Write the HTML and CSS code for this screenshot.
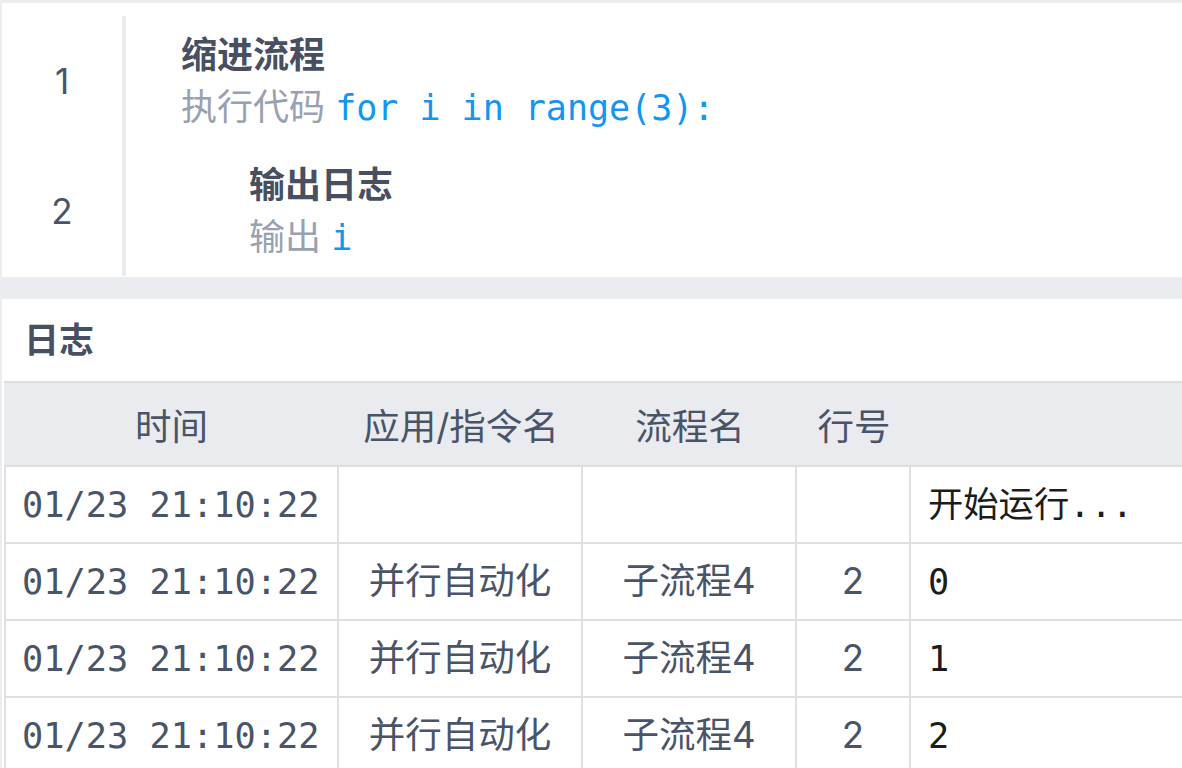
FILE: index.html
```html
<!DOCTYPE html>
<html lang="zh-CN">
<head>
<meta charset="utf-8">
<title>流程日志</title>
<link rel="stylesheet" href="styles.css">
</head>
<body>
<section class="flow">
  <div class="step">
    <div class="num">1</div>
    <div class="step-body">
      <div class="step-title">缩进流程</div>
      <div class="step-desc">执行代码 <code class="code">for i in range(3):</code></div>
    </div>
  </div>
  <div class="step">
    <div class="num">2</div>
    <div class="step-body indent">
      <div class="step-title">输出日志</div>
      <div class="step-desc">输出 <code class="code">i</code></div>
    </div>
  </div>
</section>

<section class="log">
  <h2 class="log-title">日志</h2>
  <table class="log-table">
    <colgroup>
      <col class="c-time">
      <col class="c-app">
      <col class="c-flow">
      <col class="c-line">
      <col class="c-msg">
    </colgroup>
    <thead>
      <tr><th>时间</th><th>应用/指令名</th><th>流程名</th><th>行号</th><th></th></tr>
    </thead>
    <tbody>
      <tr><td class="time">01/23 21:10:22</td><td></td><td></td><td></td><td class="msg">开始运行...</td></tr>
      <tr><td class="time">01/23 21:10:22</td><td>并行自动化</td><td>子流程4</td><td>2</td><td class="msg">0</td></tr>
      <tr><td class="time">01/23 21:10:22</td><td>并行自动化</td><td>子流程4</td><td>2</td><td class="msg">1</td></tr>
      <tr><td class="time">01/23 21:10:22</td><td>并行自动化</td><td>子流程4</td><td>2</td><td class="msg">2</td></tr>
    </tbody>
  </table>
</section>
</body>
</html>
```

FILE: styles.css
```css
html, body {
  margin: 0;
  padding: 0;
}
body {
  background: #ebecf0;
  padding: 3px 0 0 2px;
  font-family: "Inter", "Noto Sans CJK SC", sans-serif;
  color: #4a5468;
  overflow: hidden;
}

.flow {
  background: #ffffff;
  padding: 13px 0 1px 0;
}
.step {
  display: grid;
  grid-template-columns: 120px 1fr;
}
.num {
  display: flex;
  align-items: center;
  justify-content: center;
  font-size: 35px;
  color: #4a5468;
}
.step-body {
  border-left: 4px solid #ebecf0;
  padding: 13px 0 13px 55px;
  font-size: 36px;
  line-height: 52px;
}
.step-body.indent {
  padding-left: 123px;
}
.step-title,
.step-desc {
  height: 52px;
  white-space: nowrap;
}
.step-title {
  font-weight: 700;
  color: #474f60;
}
.step-desc {
  color: #98a1b1;
}
.code {
  font-family: "DejaVu Sans Mono", monospace;
  font-size: 35px;
  line-height: 1;
  color: #1296f3;
}

.log {
  margin-top: 22px;
  background: #ffffff;
  padding-left: 2px;
}
.log-title {
  margin: 0;
  padding-left: 20px;
  height: 82px;
  line-height: 82px;
  font-size: 35px;
  font-weight: 700;
  color: #474f60;
}
.log-table {
  table-layout: fixed;
  width: 1178px;
  border-collapse: separate;
  border-spacing: 0;
  font-size: 36.5px;
}
.c-time { width: 335px; }
.c-app { width: 244px; }
.c-flow { width: 214px; }
.c-line { width: 114px; }
.c-msg { width: 271px; }

.log-table th {
  background: #e9ebef;
  border-top: 2px solid #dcdee1;
  border-bottom: 2px solid #dcdee1;
  height: 82px;
  padding: 0;
  font-weight: 400;
  color: #4a5468;
  text-align: center;
  white-space: nowrap;
}
.log-table td {
  padding: 0;
  height: 75px;
  line-height: 75px;
  border-right: 2px solid #dfe0e2;
  border-bottom: 2px solid #dfe0e2;
  text-align: center;
  color: #4a5468;
  white-space: nowrap;
  overflow: hidden;
}
.log-table td:first-child {
  border-left: 2px solid #dfe0e2;
}
.log-table td:last-child {
  border-right: none;
}
.log-table td.time {
  text-align: left;
  padding-left: 16px;
  font-family: "DejaVu Sans Mono", monospace;
  font-size: 35.3px;
}
.log-table td.msg {
  text-align: left;
  padding-left: 17px;
  color: #1c1c1c;
  font-family: "DejaVu Sans Mono", "Noto Sans CJK SC", monospace;
  font-size: 35.3px;
}
```
